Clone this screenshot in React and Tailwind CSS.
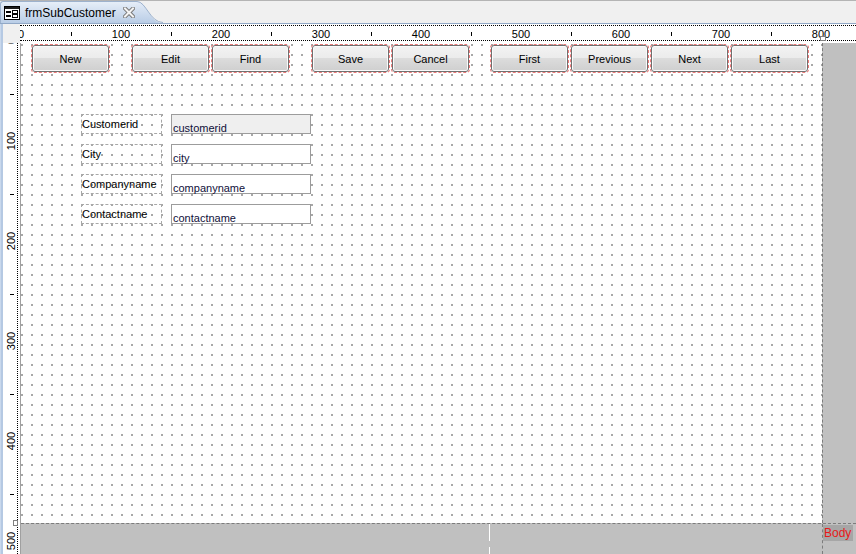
import React from 'react';

const buttons = [
  { label: 'New', ml: 'ml-[11px]' },
  { label: 'Edit', ml: 'ml-[23px]' },
  { label: 'Find', ml: 'ml-[3px]' },
  { label: 'Save', ml: 'ml-[23px]' },
  { label: 'Cancel', ml: 'ml-[3px]' },
  { label: 'First', ml: 'ml-[22px]' },
  { label: 'Previous', ml: 'ml-[3px]' },
  { label: 'Next', ml: 'ml-[3px]' },
  { label: 'Last', ml: 'ml-[3px]' },
];

const fields = [
  { label: 'Customerid', value: 'customerid', locked: true },
  { label: 'City', value: 'city' },
  { label: 'Companyname', value: 'companyname' },
  { label: 'Contactname', value: 'contactname' },
];

const hMarks = [0, 100, 200, 300, 400, 500, 600, 700, 800];
const vMarks = [0, 100, 200, 300, 400, 500];

const FormIcon = () => (
  <svg width="16" height="14" viewBox="0 0 16 14" className="shrink-0">
    <rect x="0.5" y="0.5" width="15" height="13" fill="#ffffff" stroke="#000000" />
    <rect x="1" y="1" width="14" height="2" fill="#1c1c1c" />
    <rect x="2" y="5" width="5" height="2" fill="#000000" />
    <rect x="2" y="9" width="5" height="2" fill="#000000" />
    <rect x="8.5" y="4.5" width="5" height="3" fill="#ffffff" stroke="#000000" />
    <rect x="8.5" y="8.5" width="5" height="3" fill="#ffffff" stroke="#000000" />
  </svg>
);

const CloseIcon = () => (
  <svg width="12" height="11" viewBox="0 0 12 11" className="shrink-0">
    <path d="M2 1.5 L10 9.5 M10 1.5 L2 9.5" stroke="#7a7a7a" strokeWidth="4" strokeLinecap="square" />
    <path d="M2 1.5 L10 9.5 M10 1.5 L2 9.5" stroke="#f4f4f4" strokeWidth="2" strokeLinecap="square" />
  </svg>
);

const TabCurve = () => (
  <svg width="28" height="22" viewBox="0 0 28 22" className="shrink-0">
    <defs>
      <linearGradient id="tabg" x1="0" y1="0" x2="0" y2="1">
        <stop offset="0" stopColor="#e6eef8" />
        <stop offset="1" stopColor="#b9cde6" />
      </linearGradient>
    </defs>
    <path d="M0 0 H1 C 10 0, 14 22, 26 22 H0 Z" fill="url(#tabg)" />
    <path d="M0 0.5 H1 C 10 0.5, 14 21.5, 27 21.5" fill="none" stroke="#9db2cd" />
  </svg>
);

const HRuler = () => (
  <div className="relative flex-1 bg-white overflow-hidden">
    <div className="absolute left-0 right-0 top-[1px] border-t border-dotted border-black" />
    <div className="absolute left-0 right-0 top-[16px] border-t border-dotted border-black" />
    {hMarks.map((m) => (
      <span
        key={m}
        className="absolute top-[4px] leading-[13px] text-[11px] text-black -translate-x-1/2"
        style={{ left: 1 + m }}
      >
        {m}
      </span>
    ))}
    {hMarks.map((m) => (
      <div key={'t' + m} className="absolute top-[8px] w-px h-[4px] bg-black" style={{ left: 51 + m }} />
    ))}
    <div className="absolute top-[12px] left-[800px] w-[6px] h-[5px] border border-[#808080] bg-white" />
  </div>
);

const VRuler = () => (
  <div className="relative w-[18px] bg-white border-r border-[#a0a0a0] overflow-hidden">
    <div className="absolute top-0 bottom-0 left-[14px] border-l border-dotted border-black" />
    {vMarks.map((m) => (
      <span
        key={m}
        className="absolute left-[8px] leading-[13px] text-[11px] text-black -translate-x-1/2 -translate-y-1/2 -rotate-90"
        style={{ top: m - 2 }}
      >
        {m}
      </span>
    ))}
    {vMarks.map((m) => (
      <div key={'t' + m} className="absolute left-[7px] w-[4px] h-px bg-black" style={{ top: 51 + m }} />
    ))}
    <div className="absolute left-[10px] top-[477px] w-[5px] h-[6px] border border-[#808080] bg-white" />
  </div>
);

export default function App() {
  return (
    <div className="w-[856px] h-[554px] overflow-hidden bg-[#f0f0f0] flex flex-col font-['Liberation_Sans',Arial,sans-serif] text-[11px] text-black">
      {/* document tab strip */}
      <div className="h-[24px] shrink-0 flex items-end bg-[#f0f0f0] border-t border-[#b4b4b4] border-b border-b-[#91a8c6]">
        <div className="flex h-[22px]">
          <div className="w-[136px] flex items-center pl-[3px] rounded-tl-[3px] border-t border-l border-[#9db2cd] bg-[linear-gradient(#e6eef8,#b9cde6)]">
            <FormIcon />
            <span className="ml-[5px] text-[12px] leading-[14px]">frmSubCustomer</span>
            <span className="ml-[7px] flex">
              <CloseIcon />
            </span>
          </div>
          <TabCurve />
        </div>
      </div>

      <div className="flex flex-1">
        <div className="w-[3px] bg-[#b5c9e3] border-l border-[#c9d8ec]" />
        <div className="flex flex-col flex-1">
          {/* top ruler row */}
          <div className="flex h-[19px] shrink-0">
            <div className="w-[17px] bg-[#f0f0f0] mt-[2px]" />
            <HRuler />
          </div>

          <div className="flex flex-1">
            <VRuler />
            <div className="flex flex-col flex-1">
              <div className="flex h-[480px] shrink-0">
                {/* design canvas */}
                <div className="w-[801px] h-[480px] flex flex-col bg-white bg-[conic-gradient(from_270deg_at_2px_2px,#a8a8a8_90deg,#ffffff_0)] bg-[size:10px_10px] bg-[position:0px_1px]">
                  <div className="flex mt-[2px]">
                    {buttons.map((b) => (
                      <div
                        key={b.label}
                        className={`${b.ml} w-[77px] h-[27px] flex items-center justify-center pt-[1px] rounded-[3px] border border-[#707070] bg-[linear-gradient(#f3f3f3,#ebebeb_50%,#dcdcdc_50%,#cfcfcf)] shadow-[inset_0_0_0_1px_#fbfbfb] outline-1 outline-dashed outline-[#ec7a7a] leading-[13px]`}
                      >
                        {b.label}
                      </div>
                    ))}
                  </div>

                  <div className="flex flex-col gap-[10px] mt-[42px] ml-[60px]">
                    {fields.map((f) => (
                      <div key={f.label} className="flex">
                        <div className="w-[81px] h-[20px] border border-dashed border-[#a8a8a8] pt-[3px] leading-[13px]">
                          {f.label}
                        </div>
                        <div
                          className={`ml-[9px] w-[140px] h-[20px] flex items-end pl-[1px] border border-[#9c9c9c] leading-[9px] text-[#10103a] ${f.locked ? 'bg-[#efefef]' : 'bg-white'}`}
                        >
                          {f.value}
                        </div>
                      </div>
                    ))}
                  </div>
                </div>
                <div className="flex-1 bg-[#c0c0c0] border-l border-dashed border-[#7c7c7c]" />
              </div>

              {/* below the body section */}
              <div className="flex flex-1 bg-[#c0c0c0] border-t border-dashed border-[#7c7c7c]">
                <div className="w-[801px] flex flex-col pl-[468px]">
                  <div className="w-px h-[17px] bg-white" />
                  <div className="w-px h-[6px]" />
                  <div className="w-px flex-1 bg-white" />
                </div>
                <div className="flex-1 border-l border-dashed border-[#7c7c7c] pt-[1px]">
                  <span className="inline-block bg-[#a6a6a6] text-[#e81818] text-[12px] leading-[16px] pl-[1px] pr-[2px]">
                    Body
                  </span>
                </div>
              </div>
            </div>
          </div>
        </div>
      </div>
    </div>
  );
}
